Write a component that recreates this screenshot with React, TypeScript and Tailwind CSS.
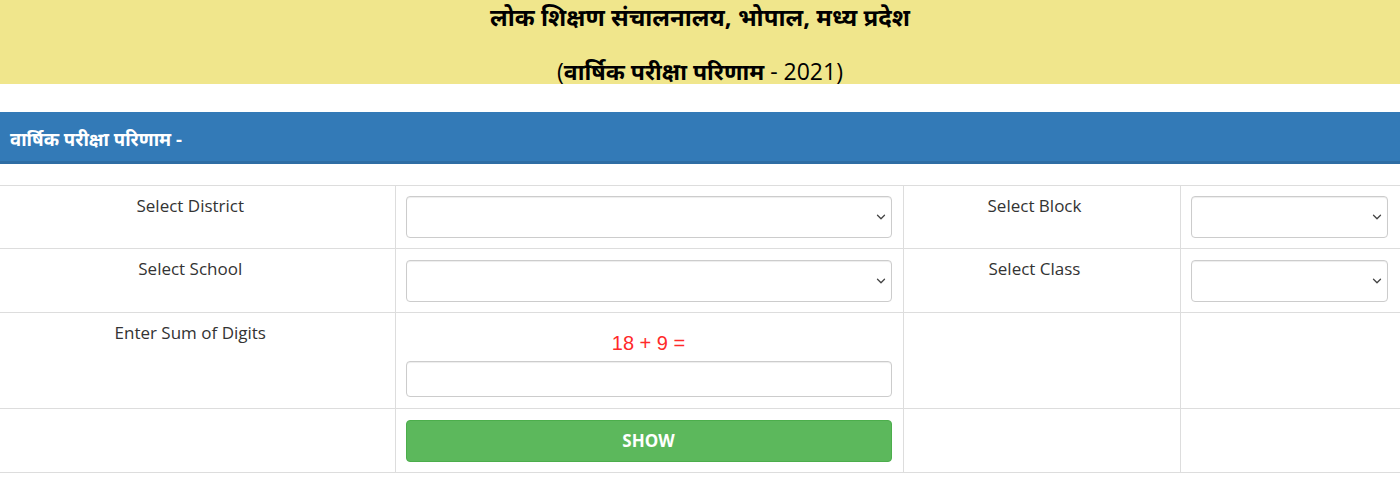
import { ChevronDown } from 'lucide-react';

const font = { fontFamily: '"Open Sans", "Noto Sans", sans-serif' };

function SelectBox({ width }: { width: string }) {
  return (
    <div className={`relative ${width}`}>
      <select className="h-[42px] w-full appearance-none rounded-[4px] border border-[#ccc] bg-white shadow-[inset_0_1px_1px_rgba(0,0,0,0.075)]" />
      <ChevronDown
        size={14}
        strokeWidth={2.2}
        className="pointer-events-none absolute right-[4px] top-[14px] text-[#444]"
      />
    </div>
  );
}

export default function App() {
  return (
    <div className="h-[478px] w-full overflow-hidden bg-white text-[#333]" style={font}>
      {/* header */}
      <div className="flex h-[84px] flex-col items-center bg-[#f0e68c] text-black">
        <h3 className="mt-[2px] text-[24px] font-bold leading-[30px]">लोक शिक्षण संचालनालय, भोपाल, मध्य प्रदेश</h3>
        <h3 className="mt-[24px] text-[23px] leading-[30px]">
          (<span className="font-bold">वार्षिक परीक्षा परिणाम</span> - 2021)
        </h3>
      </div>

      <div className="mt-[28px] flex h-[52px] items-center border-b-[3px] border-[#2e6da4] bg-[#337ab7] px-[10px] pt-[4px] text-[18.5px] font-bold text-white">
        वार्षिक परीक्षा परिणाम -
      </div>

      <table className="mt-[21px] w-[1400px] table-fixed border-collapse text-[17px]">
        <colgroup>
          <col className="w-[395px]" />
          <col className="w-[508px]" />
          <col className="w-[277px]" />
          <col className="w-[220px]" />
        </colgroup>
        <tbody>
          <tr className="h-[63px] border-y border-[#ddd]">
            <td className="border-r border-[#ddd] pr-[14px] pt-[7px] text-center align-top">Select District</td>
            <td className="border-r border-[#ddd] pl-[10px] pt-[10px] align-top">
              <SelectBox width="w-[486px]" />
            </td>
            <td className="border-r border-[#ddd] pr-[14px] pt-[7px] text-center align-top">Select Block</td>
            <td className="pl-[10px] pt-[10px] align-top">
              <SelectBox width="w-[197px]" />
            </td>
          </tr>
          <tr className="h-[64px] border-b border-[#ddd]">
            <td className="border-r border-[#ddd] pr-[14px] pt-[7px] text-center align-top">Select School</td>
            <td className="border-r border-[#ddd] pl-[10px] pt-[11px] align-top">
              <SelectBox width="w-[486px]" />
            </td>
            <td className="border-r border-[#ddd] pr-[14px] pt-[7px] text-center align-top">Select Class</td>
            <td className="pl-[10px] pt-[11px] align-top">
              <SelectBox width="w-[197px]" />
            </td>
          </tr>
          <tr className="h-[96px] border-b border-[#ddd]">
            <td className="border-r border-[#ddd] pr-[14px] pt-[7px] text-center align-top">Enter Sum of Digits</td>
            <td className="border-r border-[#ddd] pl-[10px] pt-[19px] align-top">
              <div className="flex w-[486px] flex-col items-center gap-[7px]">
                <span className="text-[20px] leading-[22px] text-[#ff2a2a]" style={{ fontFamily: '"Liberation Sans", Arial, sans-serif' }}>
                  18 + 9 =
                </span>
                <input className="h-[36px] w-full rounded-[4px] border border-[#ccc] bg-white shadow-[inset_0_1px_1px_rgba(0,0,0,0.075)]" />
              </div>
            </td>
            <td className="border-r border-[#ddd]" />
            <td />
          </tr>
          <tr className="h-[64px] border-b border-[#ddd]">
            <td className="border-r border-[#ddd]" />
            <td className="border-r border-[#ddd] pl-[10px] pt-[11px] align-top">
              <button className="h-[42px] w-[486px] rounded-[4px] border border-[#4cae4c] bg-[#5cb85c] text-[17px] font-bold text-white">
                SHOW
              </button>
            </td>
            <td className="border-r border-[#ddd]" />
            <td />
          </tr>
        </tbody>
      </table>
    </div>
  );
}
